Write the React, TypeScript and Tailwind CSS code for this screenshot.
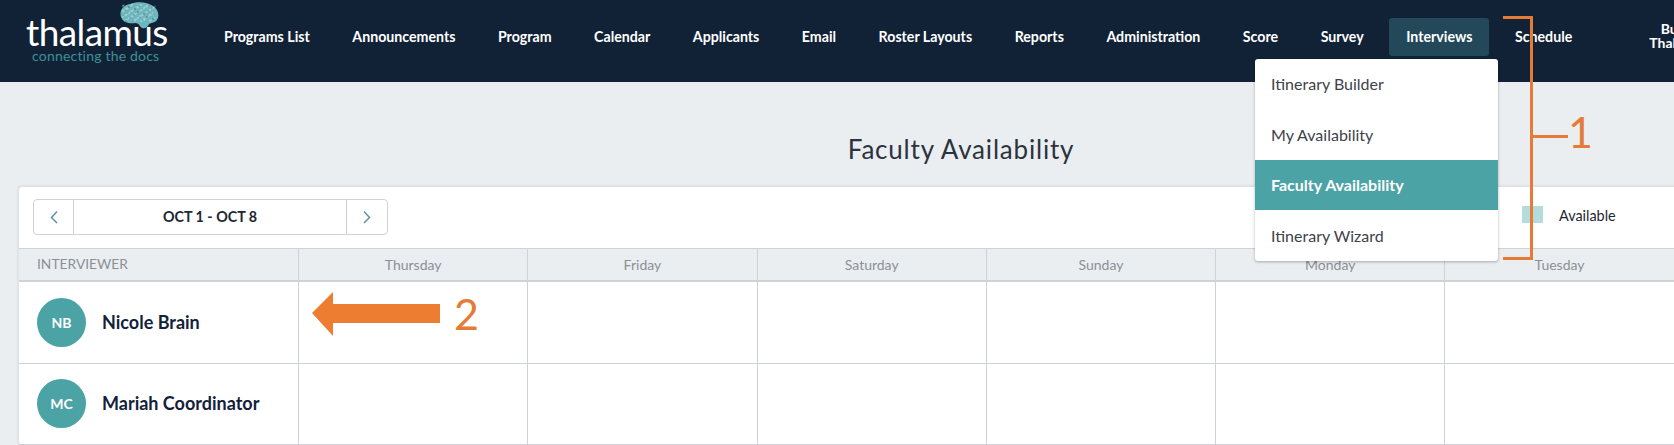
const navItems = ['Programs List', 'Announcements', 'Program', 'Calendar', 'Applicants', 'Email', 'Roster Layouts', 'Reports', 'Administration', 'Score', 'Survey', 'Interviews', 'Schedule']
const menuItems = ['Itinerary Builder', 'My Availability', 'Faculty Availability', 'Itinerary Wizard']
const days = ['Thursday', 'Friday', 'Saturday', 'Sunday', 'Monday', 'Tuesday', 'Wednesday']
const people = [
  { initials: 'NB', name: 'Nicole Brain' },
  { initials: 'MC', name: 'Mariah Coordinator' },
]

// little speckles over the brain, same pattern on every render
const specks = Array.from({ length: 110 }, (_, i) => ({
  x: 4 + ((i * 17) % 33),
  y: 3 + ((i * 11) % 17),
  r: i % 3 === 0 ? 0.8 : 0.5,
}))

const Logo = () => (
  <div className="relative w-[160px] h-[82px] shrink-0 ml-[24px]">
    <svg className="absolute left-[95px] top-[2px]" width="40" height="27" viewBox="0 0 40 27">
      <path
        d="M2 15C0 9 4 3 11 2C18-1 29 0 34 4C39 7 41 13 38 18C36 21 31 21 30 22C29 25 26 27 23 26C20 24 21 22 17 21C11 22 4 21 2 15Z"
        fill="#6db6bd"
      />
      {specks.map((s, i) => (
        <circle key={i} cx={s.x} cy={s.y} r={s.r} fill={i % 5 === 0 ? '#1d4a5a' : '#dff3f4'} opacity="0.7" />
      ))}
    </svg>
    <span className="absolute left-[2px] top-[17px] text-[37px] leading-[30px] tracking-[-0.6px] text-white font-['Lato',sans-serif]">
      thalamus
    </span>
    <span className="absolute left-[8px] top-[49px] text-[14px] leading-[14px] tracking-[0.2px] whitespace-nowrap text-[#3c9196] font-['Lato',sans-serif]">
      connecting the docs
    </span>
  </div>
)

const Header = () => (
  <div className="relative z-10 flex items-start h-[82px] bg-[#112236]">
    <Logo />
    <nav className="flex gap-[8.5px] ml-[23px] mt-[18px]">
      {navItems.map(item => (
        <a
          key={item}
          className={`h-[38px] px-[17px] pb-[1px] flex items-center rounded-[3px] text-[14.2px] font-bold whitespace-nowrap text-white ${item === 'Interviews' ? 'bg-[#22485a]' : ''}`}
        >
          {item}
        </a>
      ))}
    </nav>
    <div className="ml-[60px] mt-[22px] text-center text-[14px] leading-[14px] font-bold text-white">
      <p>Burke</p>
      <p>Thalamus</p>
    </div>
  </div>
)

const Dropdown = () => (
  <div className="absolute z-20 left-[1255px] top-[59px] w-[243px] h-[202px] bg-white rounded-[3px] shadow-[0_1px_3px_rgba(0,0,0,0.3)]">
    {menuItems.map(item => (
      <div
        key={item}
        className={`h-[50px] mb-[0.5px] px-4 flex items-center text-[16px] ${item === 'Faculty Availability' ? 'bg-[#4ba3a6] text-white font-bold' : 'text-[#3d4249]'}`}
      >
        {item}
      </div>
    ))}
  </div>
)

const Toolbar = () => (
  <div className="flex items-start h-[61px] pl-[14px] pt-[12px]">
    <div className="flex w-[355px] h-[36px] border border-[#cfd3d8] rounded-[4px]">
      <button className="w-[40px] flex items-center justify-center border-r border-[#cfd3d8]">
        <svg width="10" height="14" viewBox="0 0 10 14" fill="none" stroke="#5f93a8" strokeWidth="1.5"><path d="M8 1.5 2.5 7.5 8 13" /></svg>
      </button>
      <div className="flex-1 flex items-center justify-center text-[14.3px] font-bold text-[#1d2733]">OCT 1 - OCT 8</div>
      <button className="w-[41px] flex items-center justify-center border-l border-[#cfd3d8]">
        <svg width="10" height="14" viewBox="0 0 10 14" fill="none" stroke="#5f93a8" strokeWidth="1.5"><path d="M2 1.5 7.5 7.5 2 13" /></svg>
      </button>
    </div>
    <div className="ml-[1134px] mt-[7px] w-[21px] h-[17px] bg-[#b5dcdc]" />
    <span className="ml-[16px] mt-[7px] text-[14.4px] leading-[20px] text-[#1d2733]">Available</span>
  </div>
)

const Table = () => (
  <div className="grid grid-cols-[279px_repeat(7,1fr)] border-t border-[#cfd3d8]">
    <div className="h-[33px] pl-[18px] flex items-center bg-[#ebeef1] border-b-2 border-[#cfd3d8] text-[13.8px] text-[#8b9097]">INTERVIEWER</div>
    {days.map(day => (
      <div key={day} className="h-[33px] flex items-center justify-center bg-[#ebeef1] border-l border-b-2 border-[#cfd3d8] text-[14px] text-[#8b9097]">
        {day}
      </div>
    ))}
    {people.map(person => (
      <div key={person.name} className="contents">
        <div className="h-[81.5px] pl-[18px] flex items-center border-b border-[#cfd3d8]">
          <div className="w-[49px] h-[49px] rounded-full bg-[#4ba3a6] flex items-center justify-center text-[14px] font-bold text-white">
            {person.initials}
          </div>
          <span className="ml-[16px] text-[18px] font-bold text-[#14213a]">{person.name}</span>
        </div>
        {days.map(day => (
          <div key={day} className="h-[81.5px] border-l border-b border-[#cfd3d8]" />
        ))}
      </div>
    ))}
  </div>
)

// the orange markup laid over the screenshot
const Annotations = () => (
  <>
    <div className="absolute z-30 left-[1503px] top-[16px] w-[30px] h-[244px] border-t-[3px] border-b-[3px] border-r-[3px] border-[#e57b37]" />
    <div className="absolute z-30 left-[1533px] top-[135px] w-[35px] h-[3px] bg-[#e57b37]" />
    <span className="absolute z-30 left-[1568px] top-[105px] text-[43px] leading-[54px] text-[#e57b37] font-['Lato',sans-serif]">1</span>
    <svg className="absolute z-30 left-[312px] top-[291px]" width="128" height="46" viewBox="0 0 128 46">
      <path d="M0 22 21 1V13H128V32H21V45Z" fill="#ed7d31" />
    </svg>
    <span className="absolute z-30 left-[454px] top-[287px] text-[43px] leading-[54px] text-[#e57b37] font-['Lato',sans-serif]">2</span>
  </>
)

export default function App() {
  return (
    <div className="relative w-[1674px] h-[445px] overflow-hidden bg-[#ebeef1] font-['Lato',sans-serif]">
      <div className="w-[1922px]">
        <Header />
        <h1 className="h-[104px] pt-[48px] text-center text-[26px] leading-[38px] tracking-[0.8px] text-[#2b3340]">Faculty Availability</h1>
        <div className="mx-[18px] bg-white rounded-[4px] border border-[#dfe2e6] shadow-[0_0_2px_rgba(0,0,0,0.15)]">
          <Toolbar />
          <Table />
        </div>
      </div>
      <Dropdown />
      <Annotations />
    </div>
  )
}
